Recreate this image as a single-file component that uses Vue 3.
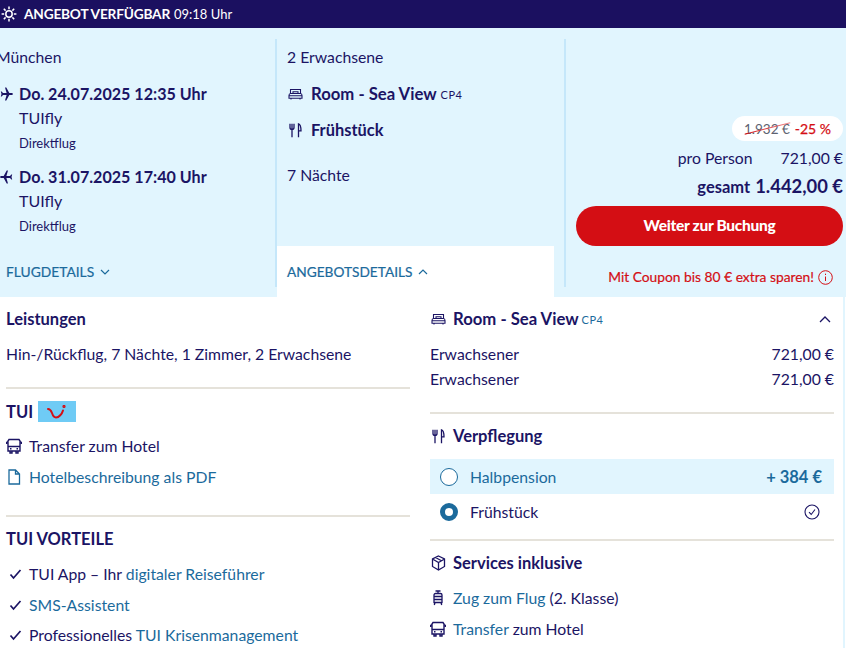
<script setup>
const navy = '#1b1464'
</script>

<template>
  <div class="page">
    <header class="topbar">
      <svg class="sun" width="16" height="16" viewBox="0 0 16 16" fill="none" stroke="#fff" stroke-width="1.5">
        <circle cx="8" cy="8" r="3.2" />
        <path d="M8 .6v2.600M8 12.800v2.600M.6 8h2.600M12.800 8h2.600M2.800 2.800l1.800 1.800M11.400 11.400l1.800 1.800M13.200 2.800l-1.800 1.800M4.600 11.400l-1.800 1.800" />
      </svg>
      <strong>ANGEBOT VERFÜGBAR</strong>
      <span>09:18 Uhr</span>
    </header>

    <section class="summary">
      <div class="col col-flight">
        <div class="city origin">München</div>
        <div class="flight">
          <div class="flight-head">
            <svg class="plane" width="13" height="14" viewBox="0 0 13 14" :fill="navy">
              <path d="M5 .5h1.300L9.300 6H12.200c.7 0 .8 2 0 2H9.300L6.300 13.500H5L6.600 8H3L1.700 9.500H.8L1.500 7 .8 4.500h.9L3 6h3.600z" />
            </svg>
            <b>Do. 24.07.2025 12:35 Uhr</b>
          </div>
          <div class="airline">TUIfly</div>
          <div class="direct">Direktflug</div>
        </div>
        <div class="flight second">
          <div class="flight-head">
            <svg class="plane" width="13" height="14" viewBox="0 0 13 14" :fill="navy">
              <path d="M8 .5H6.700L3.700 6H.8c-.7 0-.8 2 0 2h2.900l3 5.500H8L6.400 8H10l1.300 1.500h.9L11.500 7l.7-2.500h-.9L10 6H6.400z" />
            </svg>
            <b>Do. 31.07.2025 17:40 Uhr</b>
          </div>
          <div class="airline">TUIfly</div>
          <div class="direct">Direktflug</div>
        </div>
        <a class="toggle flug">FLUGDETAILS
          <svg width="10" height="6" viewBox="0 0 10 6" fill="none" stroke="#1b6a9c" stroke-width="1.2"><path d="M1 1l4 4 4-4" /></svg>
        </a>
      </div>

      <div class="col col-offer">
        <div class="offer-body">
          <div class="city">2 Erwachsene</div>
          <div class="offer-line room">
            <svg width="15" height="12" viewBox="0 0 15 12" fill="none" :stroke="navy" stroke-width="1.100"><path d="M2.500 5.500V1.500h10v4M1 7.500c0-1 .5-2 1.500-2h10c1 0 1.500 1 1.500 2v2.700H1zM1 7.800h13M3 11.500v-1.300M12 11.500v-1.300M5 5.500V3.800h5v1.700" /></svg>
            <b>Room - Sea View</b><small>CP4</small>
          </div>
          <div class="offer-line board">
            <svg width="15" height="15" viewBox="-1 0 15 15" fill="none" :stroke="navy" stroke-width="1.300"><path d="M1 .8v3.700c0 1.500 1 2 2 2s2-.5 2-2V.8M3 .8v13.500M9.500 14.300V.8c2 .5 2.500 3 2.500 7H9.500" /></svg>
            <b>Frühstück</b>
          </div>
          <div class="nights">7 Nächte</div>
        </div>
        <a class="toggle angebot">ANGEBOTSDETAILS
          <svg width="10" height="6" viewBox="0 0 10 6" fill="none" stroke="#1b6a9c" stroke-width="1.2"><path d="M1 5l4-4 4 4" /></svg>
        </a>
      </div>

      <div class="col col-price">
        <div class="discount">
          <span class="old">1.932 €</span>
          <span class="pct">-25 %</span>
        </div>
        <div class="per"><span>pro Person</span><span>721,00 €</span></div>
        <div class="total"><b>gesamt</b><b class="amount">1.442,00 €</b></div>
        <button class="cta">Weiter zur Buchung</button>
        <div class="coupon">
          Mit Coupon bis 80 € extra sparen!
          <svg width="15" height="15" viewBox="0 0 15 15" fill="none" stroke="#d40e14" stroke-width="1"><circle cx="7.500" cy="7.500" r="6.800" /><path d="M7.500 6.500v4.500M7.500 3.700v1.300" /></svg>
        </div>
      </div>
    </section>

    <section class="details">
      <div class="left">
        <div class="block leistungen">
          <h3>Leistungen</h3>
          <p>Hin-/Rückflug, 7 Nächte, 1 Zimmer, 2 Erwachsene</p>
        </div>
        <div class="block tui">
          <h3 class="tui-head">TUI
            <span class="logo">
              <svg width="22" height="14" viewBox="0 0 22 14" fill="none" stroke="#d40e14" stroke-width="2" stroke-linecap="round"><path d="M2 4C4 4 5 5.500 6 8c1 3 2.500 4.500 4 4.500 3 0 6-3.500 7-7" /><circle cx="18" cy="1.500" r=".6" fill="#d40e14" /></svg>
            </span>
          </h3>
          <div class="icon-row">
            <svg width="16" height="16" viewBox="0 0 16 16" fill="none" :stroke="navy" stroke-width="1.400"><path d="M3 1.500h10l1 1.500v10H2V3zM2 8.500h12M.5 6V4.500L2 3.500M15.500 6V4.500L14 3.500M4 13v2h2v-2M10 13v2h2v-2M4 10.800h1.500M10.500 10.800H12" /></svg>
            <span>Transfer zum Hotel</span>
          </div>
          <div class="icon-row">
            <svg width="16" height="16" viewBox="0 0 16 16" fill="none" stroke="#1b6a9c" stroke-width="1.300"><path d="M3 1h6.500L13.500 5v10H3zM9.500 1v4h4" /></svg>
            <a>Hotelbeschreibung als PDF</a>
          </div>
        </div>
        <div class="block vorteile">
          <h3>TUI VORTEILE</h3>
          <div class="icon-row check">
            <svg width="16" height="16" viewBox="0 0 16 16" fill="none" :stroke="navy" stroke-width="1.700"><path d="M3.500 8.500l3 3.500L13.500 4" /></svg>
            <span>TUI App – Ihr <a>digitaler Reiseführer</a></span>
          </div>
          <div class="icon-row check">
            <svg width="16" height="16" viewBox="0 0 16 16" fill="none" :stroke="navy" stroke-width="1.700"><path d="M3.500 8.500l3 3.500L13.500 4" /></svg>
            <a>SMS-Assistent</a>
          </div>
          <div class="icon-row check">
            <svg width="16" height="16" viewBox="0 0 16 16" fill="none" :stroke="navy" stroke-width="1.700"><path d="M3.500 8.500l3 3.500L13.500 4" /></svg>
            <span>Professionelles <a>TUI Krisenmanagement</a></span>
          </div>
        </div>
      </div>

      <div class="right">
        <div class="block rblock-room">
          <div class="room-head">
            <svg width="15" height="12" viewBox="0 0 15 12" fill="none" :stroke="navy" stroke-width="1.100"><path d="M2.500 5.500V1.500h10v4M1 7.500c0-1 .5-2 1.500-2h10c1 0 1.500 1 1.500 2v2.700H1zM1 7.800h13M3 11.500v-1.300M12 11.500v-1.300M5 5.500V3.800h5v1.700" /></svg>
            <b>Room - Sea View</b><small>CP4</small>
            <svg class="chev" width="12" height="7" viewBox="0 0 12 7" fill="none" :stroke="navy" stroke-width="1.300"><path d="M1 6l5-5 5 5" /></svg>
          </div>
          <div class="price-row"><span>Erwachsener</span><span>721,00 €</span></div>
          <div class="price-row"><span>Erwachsener</span><span>721,00 €</span></div>
        </div>
        <div class="block rblock-board">
          <div class="section-head">
            <svg width="15" height="15" viewBox="-1 0 15 15" fill="none" :stroke="navy" stroke-width="1.300"><path d="M1 .8v3.700c0 1.500 1 2 2 2s2-.5 2-2V.8M3 .8v13.500M9.500 14.300V.8c2 .5 2.500 3 2.500 7H9.500" /></svg>
            <b>Verpflegung</b>
          </div>
          <div class="option hover">
            <span class="radio"></span>
            <span class="opt-label">Halbpension</span>
            <b class="extra">+ 384 €</b>
          </div>
          <div class="option">
            <span class="radio on"></span>
            <span class="opt-label dark">Frühstück</span>
            <svg class="tick" width="16" height="16" viewBox="0 0 16 16" fill="none" :stroke="navy" stroke-width="1.100"><circle cx="8" cy="8" r="7" /><path d="M5 8.200l2.200 2.300L11 5.500" /></svg>
          </div>
        </div>
        <div class="block rblock-services">
          <div class="section-head">
            <svg width="15" height="16" viewBox="0 0 15 16" fill="none" :stroke="navy" stroke-width="1.300"><path d="M7.500 1l6 3v7.500l-6 3.500-6-3.500V4zM1.500 4l6 3.500 6-3.500M7.500 7.500V15M4.500 2.500l6 3.300" /></svg>
            <b>Services inklusive</b>
          </div>
          <div class="icon-row service">
            <svg width="16" height="16" viewBox="0 0 16 16" fill="none" :stroke="navy" stroke-width="1.300"><path d="M5.500 1h5M8 1v2.500M5.500 3.500h5c.8 0 1.500.7 1.500 1.500v7.500H4V5c0-.8.700-1.500 1.500-1.500zM4 6.500h8M4 9.500h8M5 12.500l-.7 2.500M11 12.500l.7 2.500" /></svg>
            <span><a>Zug zum Flug</a> (2. Klasse)</span>
          </div>
          <div class="icon-row service">
            <svg width="16" height="16" viewBox="0 0 16 16" fill="none" :stroke="navy" stroke-width="1.400"><path d="M3 1.500h10l1 1.500v10H2V3zM2 8.500h12M.5 6V4.500L2 3.500M15.500 6V4.500L14 3.500M4 13v2h2v-2M10 13v2h2v-2M4 10.800h1.500M10.500 10.800H12" /></svg>
            <span><a>Transfer</a> zum Hotel</span>
          </div>
        </div>
      </div>
    </section>
  </div>
</template>

<style scoped>
.page {
  width: 846px;
  height: 648px;
  overflow: hidden;
  background: #fff;
  color: #1b1464;
  font-family: Lato, "Open Sans", sans-serif;
  font-size: 15.750px;
  line-height: 20px;
}
a { color: #1b6a9c; text-decoration: none; }
h3 { margin: 0; font-size: 16.500px; font-weight: 700; line-height: 20px; }
p { margin: 0; }
svg { flex: none; display: block; }

.topbar {
  height: 28px;
  background: #1b1060;
  color: #fff;
  display: flex;
  align-items: center;
  gap: 4px;
  padding-left: 1px;
  font-size: 13px;
}
.topbar strong { margin-left: 3px; font-weight: 700; font-size: 13.700px; letter-spacing: -.2px; }

.summary {
  height: 269px;
  background: #e1f5fe;
  display: flex;
  padding-top: 11px;
  box-sizing: border-box;
}
.col { box-sizing: border-box; position: relative; }
.col-flight { width: 276px; margin-left: -1px; padding-top: 8px; flex: none; }
.city { height: 20px; }
.origin { margin-left: -3px; }
.flight { margin-top: 17px; }
.flight.second { margin-top: 14px; }
.flight-head { display: flex; align-items: center; gap: 6px; font-size: 16.100px; height: 20px; }
.plane { margin-left: 1px; }
.airline { margin: 4px 0 0 20px; font-size: 16px; height: 20px; }
.direct { margin: 5px 0 0 20px; font-size: 13px; height: 20px; }
.toggle { display: flex; align-items: center; gap: 6px; font-size: 13.800px; -webkit-text-stroke: .2px; }
.flug { margin: 26px 0 0 7px; }

.col-offer {
  width: 291px;
  flex: none;
  border-left: 2px solid #c5e7fa;
  border-right: 2px solid #c5e7fa;
  display: flex;
  flex-direction: column;
  height: 248px;
}
.offer-body { padding: 8px 0 0 10px; height: 207px; box-sizing: border-box; }
.offer-line { display: flex; align-items: center; gap: 8px; font-size: 16.700px; height: 20px; }
.offer-line.room { margin-top: 17px; }
.offer-line.board { margin-top: 16px; }
.offer-line svg { margin-left: 1px; }
.offer-line.board b { font-size: 16.400px; }
small { font-size: 11px; letter-spacing: .5px; margin-left: -4px; margin-top: 2px; }
.nights { margin-top: 25px; }
.angebot {
  background: #fff;
  height: 51px;
  width: 277px;
  padding-left: 10px;
  box-sizing: border-box;
  flex: none;
  margin-bottom: -11px;
  font-size: 13.700px;
}

.col-price {
  flex: 1;
  padding: 77px 3px 0 10px;
  display: flex;
  flex-direction: column;
  align-items: flex-end;
}
.discount {
  height: 25px;
  width: 111px;
  box-sizing: border-box;
  background: #fff;
  border-radius: 13px;
  display: flex;
  align-items: center;
  justify-content: center;
  gap: 5px;
  font-size: 13.500px;
}
.old {
  color: #5d6270;
  position: relative;
}
.old::after {
  content: "";
  position: absolute;
  left: 0;
  right: -1px;
  top: 9px;
  height: 1.2px;
  background: linear-gradient(90deg, #d40e14, #f08a8e);
  transform: rotate(-14deg);
}
.pct { color: #d40e14; -webkit-text-stroke: .25px; font-size: 14px; }
.per { display: flex; gap: 28px; margin-top: 7px; height: 20px; }
.total { display: flex; align-items: baseline; gap: 5px; margin-top: 8px; height: 24px; font-size: 16.500px; }
.amount { font-size: 18.400px; }
.cta {
  width: 267px;
  height: 40px;
  margin-top: 6px;
  padding: 0 0 2px;
  border: 0;
  border-radius: 20px;
  background: #d40e14;
  color: #fff;
  font: 900 15.500px Lato, sans-serif;
  letter-spacing: -.3px;
}
.coupon {
  display: flex;
  align-items: center;
  gap: 4px;
  margin-top: 21px;
  margin-right: 10px;
  color: #d40e14;
  font-size: 13.800px;
  -webkit-text-stroke: .2px;
}

.details {
  display: grid;
  grid-template-columns: 404px 404px;
  column-gap: 20px;
  padding-left: 6px;
  border-right: 2px solid #e1f5fe;
  width: 845px;
  box-sizing: border-box;
  height: 351px;
}
.block { border-bottom: 2px solid #e5e2da; box-sizing: border-box; }
.block:last-child { border-bottom: 0; }
.leistungen { height: 92px; padding-top: 12px; }
.leistungen p { margin-top: 15px; }
.tui { height: 128px; padding-top: 12px; }
.tui-head { display: flex; align-items: center; gap: 5px; height: 21px; }
.logo { width: 38px; height: 21px; background: #6fcbf5; display: flex; align-items: center; justify-content: center; }
.icon-row { display: flex; align-items: center; gap: 7px; height: 20px; margin-top: 11px; }
.tui .icon-row:first-of-type { margin-top: 14px; }
.vorteile { padding-top: 12px; }
.vorteile .icon-row { margin-top: 11px; }
.vorteile h3 + .icon-row { margin-top: 15px; }
.vorteile .icon-row:last-child { margin-top: 10px; }
.check svg { margin-left: 1px; margin-right: -1px; }

.room-head { display: flex; align-items: center; gap: 7px; height: 20px; font-size: 16.700px; padding-left: 1px; }
.room-head small { color: #1b6a9c; }
.chev { margin-left: auto; margin-right: 3px; }
.rblock-room { height: 117px; padding-top: 12px; }
.price-row { display: flex; justify-content: space-between; margin-top: 5px; height: 20px; }
.room-head + .price-row { margin-top: 15px; }
.rblock-board { height: 127px; padding-top: 12px; }
.section-head { display: flex; align-items: center; gap: 7px; height: 20px; font-size: 16.500px; padding-left: 1px; }
.option { display: flex; align-items: center; height: 36px; padding: 0 12px 0 10px; gap: 12px; }
.option.hover { background: #e1f5fe; margin-top: 13px; height: 35px; }
.radio { width: 18px; height: 18px; border: 1.200px solid #1b6a9c; border-radius: 50%; background: #fff; box-sizing: border-box; flex: none; }
.radio.on { background: #fff; border: 5.500px solid #1b6a9c; }
.opt-label { color: #1b6a9c; flex: 1; }
.opt-label.dark { color: #1b1464; }
.extra { color: #1b6a9c; font-size: 16.500px; }
.tick { margin-right: 2px; }
.rblock-services { padding-top: 12px; }
.service { margin-top: 11px; gap: 7px; }
.section-head + .service { margin-top: 15px; }
</style>
